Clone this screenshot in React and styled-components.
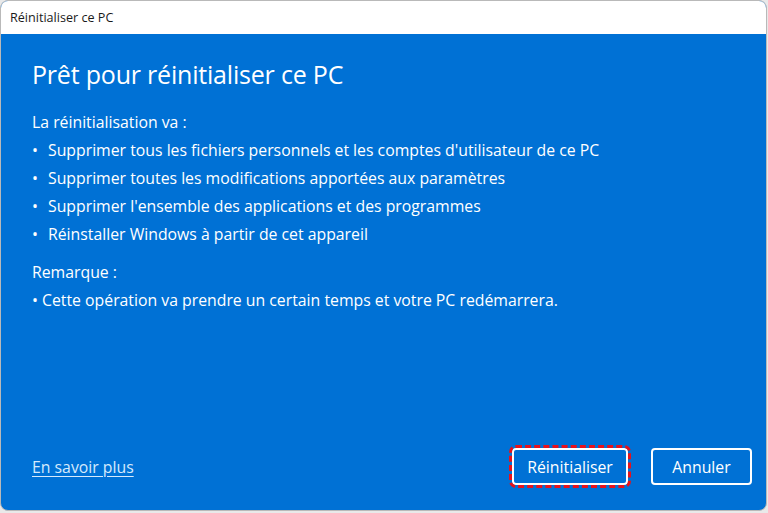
import React from "react";
import styled, { createGlobalStyle } from "styled-components";

const Global = createGlobalStyle`
  html, body { margin: 0; padding: 0; background: #e9e9e9; }
  body { font-family: "Open Sans", "Noto Sans", sans-serif; }
  * { box-sizing: border-box; }
`;

const Window = styled.div`
  width: 767px;
  height: 511px;
  border: 1px solid #b9b9b9;
  border-radius: 8px;
  overflow: hidden;
  display: flex;
  flex-direction: column;
  background: #0071d5;
`;

const TitleBar = styled.div`
  height: 33px;
  flex: none;
  background: #ffffff;
  display: flex;
  align-items: center;
  padding-left: 9px;
  font-size: 12.6px;
  color: #1a1a1a;
`;

const Body = styled.div`
  flex: 1;
  display: flex;
  flex-direction: column;
  padding: 22px 14px 25px 31px;
  color: #ffffff;
`;

const Heading = styled.h1`
  margin: 0 0 16px;
  font-weight: 400;
  font-size: 25px;
  line-height: 36px;
  letter-spacing: -0.2px;
`;

const Para = styled.div`
  font-size: 15.8px;
  line-height: 28px;
  margin-top: ${(p) => p.$gap || 0}px;
`;

const List = styled.ul`
  list-style: none;
  margin: 0;
  padding: 0;
`;

const Item = styled.li`
  display: flex;
  font-size: 15.8px;
  line-height: 28px;
  &::before {
    content: "•";
    width: 16px;
    flex: none;
    padding-left: 0;
  }
`;

const Footer = styled.div`
  margin-top: auto;
  display: flex;
  align-items: center;
`;

const Link = styled.a`
  color: #d6eafc;
  text-decoration: underline;
  text-underline-offset: 3px;
  font-size: 15.8px;
  cursor: pointer;
`;

const Buttons = styled.div`
  margin-left: auto;
  display: flex;
  gap: 23px;
`;

const Button = styled.button`
  height: 37px;
  width: ${(p) => p.$w}px;
  border: 2px solid #ffffff;
  border-radius: 4px;
  background: #0071d5;
  color: #ffffff;
  font-family: inherit;
  font-size: 15.8px;
  outline: ${(p) => (p.$focus ? "3px dashed #e8111a" : "none")};
  outline-offset: 0;
`;

export default function App() {
  return (
    <>
      <Global />
      <Window>
        <TitleBar>Réinitialiser ce PC</TitleBar>
        <Body>
          <Heading>Prêt pour réinitialiser ce PC</Heading>
          <Para>La réinitialisation va :</Para>
          <List>
            <Item>Supprimer tous les fichiers personnels et les comptes d'utilisateur de ce PC</Item>
            <Item>Supprimer toutes les modifications apportées aux paramètres</Item>
            <Item>Supprimer l'ensemble des applications et des programmes</Item>
            <Item>Réinstaller Windows à partir de cet appareil</Item>
          </List>
          <Para $gap={10}>Remarque :</Para>
          <Para>• Cette opération va prendre un certain temps et votre PC redémarrera.</Para>
          <Footer>
            <Link>En savoir plus</Link>
            <Buttons>
              <Button $w={116} $focus>Réinitialiser</Button>
              <Button $w={101}>Annuler</Button>
            </Buttons>
          </Footer>
        </Body>
      </Window>
    </>
  );
}
